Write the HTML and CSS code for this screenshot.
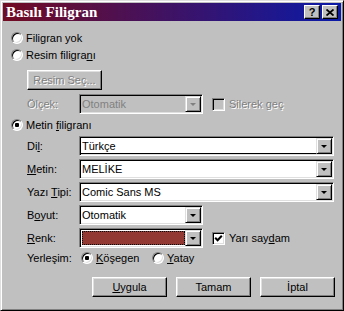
FILE: index.html
```html
<!DOCTYPE html>
<html lang="tr">
<head>
  <meta charset="UTF-8" />
  <title>Basılı Filigran</title>
  <link rel="stylesheet" href="styles.css">
</head>
<body>
  <div class="window">
    <div class="titlebar">
      <span class="title">Basılı Filigran</span>
      <div class="tb-buttons">
        <span class="tb-btn">?</span>
        <span class="tb-btn">
          <svg width="8" height="7" viewBox="0 0 8 7"><path d="M0.5 0.5 L7.5 6.5 M7.5 0.5 L0.5 6.5" stroke="#000" stroke-width="1.8"/></svg>
        </span>
      </div>
    </div>

    <div class="content">
      <!-- picture options -->
      <div class="opt r1"><span class="radio"></span><span>Filigran yok</span></div>
      <div class="opt r2"><span class="radio"></span><span>Resim filigra<u>n</u>ı</span></div>
      <div class="indent r-btn"><span class="btn disabled">Resim Seç...</span></div>
      <div class="indent row r-scale">
        <span class="lbl disabled-text">Ölçek:</span>
        <div class="combo short disabled"><span class="val">Otomatik</span><span class="arrow"><i></i></span></div>
        <span class="check disabled"></span><span class="disabled-text">Silerek geç</span>
      </div>

      <!-- text options -->
      <div class="opt r-text"><span class="radio on"></span><span>Metin <u>f</u>iligranı</span></div>
      <div class="indent row r-first">
        <span class="lbl">Di<u>l</u>:</span>
        <div class="combo wide dark-bottom"><span class="val">Türkçe</span><span class="arrow"><i></i></span></div>
      </div>
      <div class="indent row r-next">
        <span class="lbl"><u>M</u>etin:</span>
        <div class="combo wide"><span class="val">MELİKE</span><span class="arrow"><i></i></span></div>
      </div>
      <div class="indent row r-next">
        <span class="lbl">Yazı <u>T</u>ipi:</span>
        <div class="combo wide"><span class="val">Comic Sans MS</span><span class="arrow"><i></i></span></div>
      </div>
      <div class="indent row r-next">
        <span class="lbl">B<u>o</u>yut:</span>
        <div class="combo short"><span class="val">Otomatik</span><span class="arrow"><i></i></span></div>
      </div>
      <div class="indent row r-next">
        <span class="lbl"><u>R</u>enk:</span>
        <div class="combo short"><span class="val"><span class="swatch"></span></span><span class="arrow"><i></i></span></div>
        <span class="check">
          <svg width="9" height="9" viewBox="0 0 9 9"><path d="M1.2 3.8 L3.6 6.2 L7.8 1.8" stroke="#000" stroke-width="2" fill="none"/></svg>
        </span>
        <span>Yarı say<u>d</u>am</span>
      </div>
      <div class="indent row r-place">
        <span class="lbl">Yerleşim:</span>
        <div class="opt place"><span class="radio on"></span><span><u>K</u>öşegen</span></div>
        <div class="opt"><span class="radio"></span><span><u>Y</u>atay</span></div>
      </div>

      <div class="actions">
        <span class="btn"><span><u>U</u>ygula</span></span>
        <span class="btn">Tamam</span>
        <span class="btn">İptal</span>
      </div>
    </div>
  </div>
</body>
</html>
```

FILE: styles.css
```css
* {
  box-sizing: border-box;
}
body {
  margin: 0;
  font-family: "Liberation Sans", Arial, sans-serif;
  font-size: 11px;
  color: #000;
  background: #c0c0c0;
}
u {
  text-decoration-thickness: 1px;
  text-underline-offset: 1px;
}
.window {
  width: 344px;
  height: 311px;
  background: #c0c0c0;
  border: 1px solid;
  border-color: #dfdfdf #000 #000 #dfdfdf;
  box-shadow: inset 1px 1px #fff, inset -1px -1px #808080;
  padding: 2px;
}
.titlebar {
  height: 18px;
  display: flex;
  align-items: center;
  justify-content: space-between;
  padding: 0 3px;
  background: linear-gradient(to right, #720b22, #0a1aa8);
}
.title {
  font-family: "Liberation Serif", "Times New Roman", serif;
  font-weight: bold;
  font-size: 15px;
  color: #fff;
  line-height: 18px;
}
.tb-buttons {
  display: flex;
  gap: 2px;
}
.tb-btn {
  width: 16px;
  height: 14px;
  display: flex;
  align-items: center;
  justify-content: center;
  background: #c0c0c0;
  border: 1px solid;
  border-color: #fff #000 #000 #fff;
  box-shadow: inset -1px -1px #808080;
  font-weight: bold;
  font-size: 11px;
}
.content {
  padding: 9px 6px 0 8px;
}
.row {
  display: flex;
  align-items: center;
}
.opt {
  height: 16px;
  display: flex;
  align-items: center;
  gap: 3px;
}
.radio {
  position: relative;
  width: 12px;
  height: 12px;
  border-radius: 50%;
  background: #fff;
  border: 1px solid;
  border-color: #808080 #fff #fff #808080;
  box-shadow: inset 1px 1px #000, inset -1px -1px #dfdfdf;
}
.radio.on::after {
  content: "";
  position: absolute;
  left: 3px;
  top: 3px;
  width: 4px;
  height: 4px;
  border-radius: 1px;
  background: #000;
}
.indent {
  margin-left: 16px;
}
.r2 {
  margin-top: 1px;
}
.r-btn {
  margin-top: 7px;
}
.r-scale {
  margin-top: 4px;
}
.r-text {
  margin-top: 3px;
}
.r-first,
.r-next {
  margin-top: 3px;
}
.r-place {
  margin-top: 2px;
  height: 16px;
}
.lbl {
  width: 52px;
  flex-shrink: 0;
}
.disabled-text {
  color: #808080;
  text-shadow: 1px 1px 0 #fff;
}
.btn {
  display: inline-flex;
  align-items: center;
  justify-content: center;
  width: 75px;
  height: 20px;
  background: #c0c0c0;
  border: 1px solid;
  border-color: #fff #000 #000 #fff;
  box-shadow: inset -1px -1px #808080, inset 1px 1px #dfdfdf;
}
.btn.disabled {
  color: #808080;
  text-shadow: 1px 1px 0 #fff;
}
.combo {
  display: flex;
  height: 20px;
  padding: 1px;
  background: #fff;
  border: 1px solid;
  border-color: #808080 #fff #fff #808080;
  box-shadow: inset 1px 1px #000, inset -1px -1px #dfdfdf;
}
.combo.wide {
  width: 255px;
}
.combo.short {
  width: 124px;
}
.combo .val {
  flex: 1;
  display: block;
  padding-left: 1px;
  line-height: 16px;
  background: #fff;
}
.combo.dark-bottom .val {
  box-shadow: inset 0 -1px #000;
}
.combo.disabled,
.combo.disabled .val {
  background: #c0c0c0;
  color: #808080;
}
.arrow {
  width: 16px;
  height: 16px;
  display: flex;
  align-items: center;
  justify-content: center;
  background: #c0c0c0;
  border: 1px solid;
  border-color: #dfdfdf #000 #000 #dfdfdf;
  box-shadow: inset 1px 1px #fff, inset -1px -1px #808080;
}
.arrow i {
  width: 0;
  height: 0;
  margin-top: 1px;
  border-left: 3px solid transparent;
  border-right: 3px solid transparent;
  border-top: 3px solid #000;
}
.combo.disabled .arrow i {
  border-top-color: #808080;
}
.swatch {
  display: block;
  width: 100%;
  height: 14px;
  margin-top: 1px;
  border: 1px dotted #000;
  background: #933934;
}
.check {
  width: 13px;
  height: 13px;
  margin: 0 4px 0 9px;
  display: flex;
  align-items: center;
  justify-content: center;
  background: #fff;
  border: 1px solid;
  border-color: #808080 #fff #fff #808080;
  box-shadow: inset 1px 1px #000, inset -1px -1px #dfdfdf;
}
.check.disabled {
  background: #c0c0c0;
}
.place {
  margin-left: 2px;
  width: 71px;
}
.actions {
  margin-top: 11px;
  display: flex;
  justify-content: flex-end;
  gap: 9px;
}
```
